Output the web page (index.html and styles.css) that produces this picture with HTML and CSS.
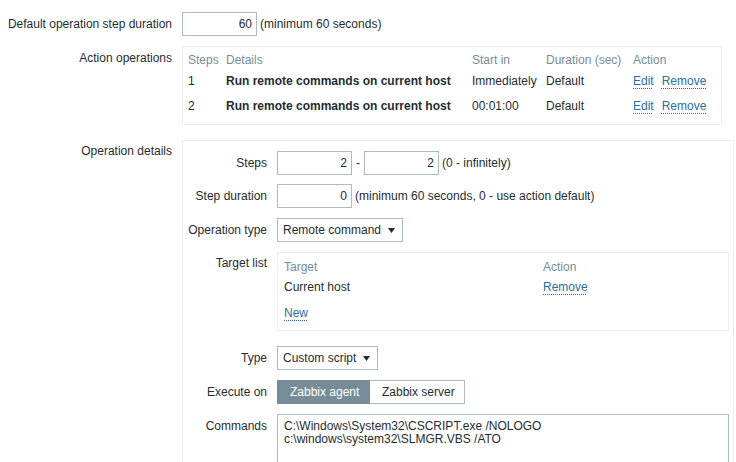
FILE: index.html
```html
<!DOCTYPE html>
<html>
<head>
<meta charset="utf-8">
<link rel="stylesheet" href="styles.css">
</head>
<body>
<div class="form">
  <div class="row row-default">
    <div class="label lbl-input">Default operation step duration</div>
    <div class="field">
      <input class="num" value="60"><span class="hint">(minimum 60 seconds)</span>
    </div>
  </div>

  <div class="row row-actions">
    <div class="label lbl-box">Action operations</div>
    <div class="field-top">
      <div class="box ops">
        <div class="th">Steps</div><div class="th">Details</div><div class="th">Start in</div><div class="th">Duration (sec)</div><div class="th">Action</div>
        <div class="td">1</div><div class="td bold">Run remote commands on current host</div><div class="td">Immediately</div><div class="td">Default</div><div class="td"><a class="link edit">Edit</a><a class="link">Remove</a></div>
        <div class="td">2</div><div class="td bold">Run remote commands on current host</div><div class="td">00:01:00</div><div class="td">Default</div><div class="td"><a class="link edit">Edit</a><a class="link">Remove</a></div>
      </div>
    </div>
  </div>

  <div class="row">
    <div class="label lbl-details">Operation details</div>
    <div class="box details">
      <div class="irow r9">
        <div class="label lbl-input">Steps</div>
        <div class="field"><input class="num" value="2"><span class="dash">-</span><input class="num" value="2"><span class="hint">(0 - infinitely)</span></div>
      </div>
      <div class="irow r10">
        <div class="label lbl-input">Step duration</div>
        <div class="field"><input class="num" value="0"><span class="hint">(minimum 60 seconds, 0 - use action default)</span></div>
      </div>
      <div class="irow r10">
        <div class="label lbl-input">Operation type</div>
        <div class="field"><div class="select w-op">Remote command<svg class="arrow" width="7" height="5" viewBox="0 0 7 5"><path d="M0 0H7L3.5 5Z" fill="#1f2c33"/></svg></div></div>
      </div>
      <div class="irow r15">
        <div class="label lbl-tl">Target list</div>
        <div class="box targets">
          <div class="tth">Target</div><div class="tth">Action</div>
          <div class="ttd">Current host</div><div class="ttd"><a class="link">Remove</a></div>
          <div class="ttd tnew"><a class="link">New</a></div>
        </div>
      </div>
      <div class="irow r10">
        <div class="label lbl-input">Type</div>
        <div class="field"><div class="select w-type">Custom script<svg class="arrow" width="7" height="5" viewBox="0 0 7 5"><path d="M0 0H7L3.5 5Z" fill="#1f2c33"/></svg></div></div>
      </div>
      <div class="irow r10">
        <div class="label lbl-input">Execute on</div>
        <div class="field">
          <div class="seg"><span class="seg-btn on">Zabbix agent</span><span class="seg-btn">Zabbix server</span></div>
        </div>
      </div>
      <div class="irow">
        <div class="label lbl-cmd">Commands</div>
        <div class="cmd">C:\Windows\System32\CSCRIPT.exe /NOLOGO<br>c:\windows\system32\SLMGR.VBS /ATO</div>
      </div>
    </div>
  </div>
</div>
</body>
</html>
```

FILE: styles.css
```css
* { box-sizing: border-box; }
html, body { margin: 0; padding: 0; overflow: hidden; background: #fff; }
body {
  width: 736px;
  height: 462px;
  font: 12px/14px "Liberation Sans", Arial, sans-serif;
  color: #1f2c33;
}
.form { padding-top: 12px; }
.row {
  display: grid;
  grid-template-columns: 172px 1fr;
  column-gap: 10px;
}
.row-default { margin-bottom: 10px; }
.row-actions { margin-bottom: 15px; }
.label { text-align: right; white-space: nowrap; }
.lbl-input { line-height: 24px; }
.lbl-box { padding-top: 5px; }
.lbl-details { padding-top: 4px; }
.lbl-tl { padding-top: 4px; }
.lbl-cmd { padding-top: 5px; }
.field { display: flex; align-items: center; height: 24px; }
.field-top { display: flex; }

input.num {
  width: 75px;
  height: 24px;
  border: 1px solid #acbbc2;
  padding: 0 4px;
  text-align: right;
  font: inherit;
  color: #1f2c33;
  background: #fff;
  outline: none;
}
.hint { margin-left: 3px; }
.dash { margin: 0 4px 0 4px; }

.box { border: 1px solid #ebeef0; background: #fff; }

.ops {
  display: grid;
  grid-template-columns: 38px 246px 74px 87px 83px;
  padding: 5px 5px 5px 5px;
}
.th { color: #768d99; line-height: 17px; white-space: nowrap; }
.td { line-height: 25px; white-space: nowrap; }
.bold { font-weight: bold; }

.link {
  color: #2a6ea3;
  text-decoration: underline dotted;
  text-underline-offset: 3px;
  text-decoration-thickness: 1px;
  cursor: pointer;
}
.edit { margin-right: 8px; }

.details {
  width: 552px;
  padding: 10px 4px 40px 0;
}
.irow {
  display: grid;
  grid-template-columns: 84px 1fr;
  column-gap: 10px;
}
.r9 { margin-bottom: 9px; }
.r10 { margin-bottom: 10px; }
.r11 { margin-bottom: 11px; }
.r15 { margin-bottom: 15px; }

.select {
  height: 24px;
  border: 1px solid #acbbc2;
  padding: 0 0 0 5px;
  display: flex;
  align-items: center;
  position: relative;
  background: #fff;
}
.w-op { width: 126px; }
.w-type { width: 101px; }
.arrow { position: absolute; right: 7px; top: 9px; }

.targets {
  display: grid;
  grid-template-columns: 259px 1fr;
  padding: 4px 6px 7px 6px;
}
.tth { color: #768d99; line-height: 20px; }
.ttd { line-height: 20px; }
.tnew { grid-column: 1 / 3; margin-top: 6px; }

.seg { display: flex; height: 24px; }
.seg-btn {
  height: 24px;
  line-height: 22px;
  border: 1px solid #acbbc2;
  padding: 0 12px;
  background: #fff;
  white-space: nowrap;
}
.seg-btn.on {
  width: 93px;
  background: #768d99;
  border-color: #768d99;
  color: #fff;
}
.seg-btn + .seg-btn { width: 95px; border-left: none; }

.cmd {
  border: 1px solid #acbbc2;
  height: 80px;
  padding: 5px 6px;
  line-height: 13px;
  white-space: nowrap;
  color: #1f2c33;
}
```
